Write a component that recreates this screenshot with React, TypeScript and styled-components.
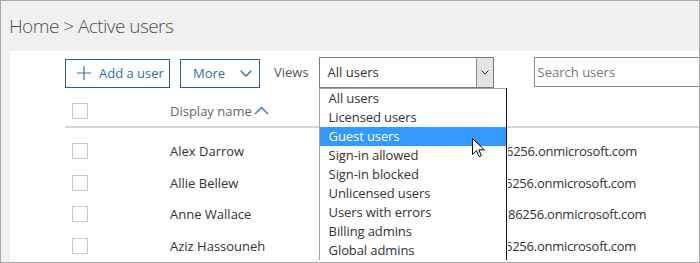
import styled, { createGlobalStyle } from "styled-components"

const GlobalStyle = createGlobalStyle`
  html, body {
    margin: 0;
    padding: 0;
    background: #ffffff;
  }
  body {
    font-family: "Open Sans", "Noto Sans", "Liberation Sans", sans-serif;
  }
`

const Frame = styled.div`
  width: 700px;
  height: 263px;
  box-sizing: border-box;
  border: 1px solid #a9a9a9;
  background: #f0f0f0;
  display: flex;
  flex-direction: column;
  overflow: hidden;
`

const Breadcrumb = styled.div`
  height: 50px;
  padding-left: 8px;
  display: flex;
  align-items: center;
  font-size: 19px;
  font-weight: 300;
  color: #505050;
  letter-spacing: -0.55px;
`

const Panel = styled.div`
  flex: 1;
  margin-left: 9px;
  background: #ffffff;
  padding-left: 55px;
  position: relative;
`

const Toolbar = styled.div`
  display: flex;
  align-items: center;
  height: 30px;
  margin-top: 6px;
`

const OutlineButton = styled.button<{ w: number; pad: number }>`
  flex-shrink: 0;
  width: ${({ w }) => w}px;
  height: 29px;
  margin-top: 2px;
  box-sizing: border-box;
  border: 1px solid #2b5f94;
  background: #ffffff;
  color: #2f6eac;
  font-family: inherit;
  font-size: 13px;
  white-space: nowrap;
  display: flex;
  align-items: center;
  gap: 8px;
  padding: 0 0 0 ${({ pad }) => pad}px;
  margin-right: 10px;
`

const Label = styled.span`
  flex-shrink: 0;
  font-size: 13px;
  color: #555555;
  margin: 0 10px 0 4px;
`

const SelectWrap = styled.div`
  flex-shrink: 0;
  position: relative;
  width: 175px;
  height: 31px;
  box-sizing: border-box;
  border: 1px solid #7a7a7a;
  display: flex;
  align-items: center;
`

const SelectValue = styled.span`
  flex: 1;
  font-size: 13px;
  color: #333333;
  padding-left: 8px;
`

const SelectButton = styled.div`
  width: 17px;
  height: 100%;
  box-sizing: border-box;
  border-left: 1px solid #8a8a8a;
  background: #e3e3e3;
  display: flex;
  align-items: center;
  justify-content: center;
`

const Menu = styled.ul`
  position: absolute;
  top: 30px;
  left: -1px;
  width: 188px;
  margin: 0;
  padding: 0;
  list-style: none;
  box-sizing: border-box;
  background: #ffffff;
  border-left: 1px solid #a0a0a0;
  border-right: 1px solid #111111;
  border-top: 1px solid #a0a0a0;
  z-index: 5;
`

const MenuItem = styled.li<{ active?: boolean }>`
  height: 19px;
  line-height: 19px;
  padding-left: 9px;
  font-size: 13px;
  letter-spacing: -0.1px;
  color: ${({ active }) => (active ? "#ffffff" : "#333333")};
  background: ${({ active }) => (active ? "#3399ff" : "transparent")};
  white-space: nowrap;
`

const Search = styled.div`
  flex-shrink: 0;
  margin-left: 40px;
  width: 200px;
  height: 30px;
  box-sizing: border-box;
  border: 1px solid #8a8a8a;
  display: flex;
  align-items: center;
  padding-left: 3px;
  font-size: 13px;
  color: #777777;
`

const Table = styled.div`
  margin-top: 8px;
`

const HeaderRow = styled.div`
  display: flex;
  align-items: center;
  height: 31px;
  border-bottom: 2px solid #d4d4d4;
`

const Body = styled.div`
  padding-top: 7px;
`

const Row = styled.div`
  display: flex;
  align-items: center;
  height: 31.7px;
`

const Check = styled.div`
  width: 16px;
  height: 16px;
  box-sizing: border-box;
  border: 1px solid #c8c8c8;
  margin-left: 7px;
  flex-shrink: 0;
`

const NameCell = styled.div<{ head?: boolean }>`
  margin-left: 82px;
  width: 338px;
  flex-shrink: 0;
  font-size: 13px;
  color: ${({ head }) => (head ? "#666666" : "#333333")};
  display: flex;
  align-items: center;
  gap: 2px;
  white-space: nowrap;
`

const MailCell = styled.div`
  overflow: hidden;
  font-size: 13px;
  letter-spacing: -0.25px;
  color: #333333;
  white-space: nowrap;
`

const MailText = styled.span<{ shift: number }>`
  display: inline-block;
  margin-left: ${({ shift }) => -shift}px;
`

const Cursor = styled.svg`
  position: absolute;
  left: 462px;
  top: 87px;
  z-index: 6;
`

// only the part of each user name that shows right of the open menu
const users = [
  { name: "Alex Darrow", mail: "6256.onmicrosoft.com", shift: 2 },
  { name: "Allie Bellew", mail: "6256.onmicrosoft.com", shift: 3 },
  { name: "Anne Wallace", mail: "86256.onmicrosoft.com", shift: 0 },
  { name: "Aziz Hassouneh", mail: "6256.onmicrosoft.com", shift: 3 },
]

const views = [
  "All users",
  "Licensed users",
  "Guest users",
  "Sign-in allowed",
  "Sign-in blocked",
  "Unlicensed users",
  "Users with errors",
  "Billing admins",
  "Global admins",
]

export default function App() {
  return (
    <>
      <GlobalStyle />
      <Frame>
        <Breadcrumb>Home &gt; Active users</Breadcrumb>
        <Panel>
          <Toolbar>
            <OutlineButton w={105} pad={11}>
              <svg width="14" height="14" viewBox="0 0 14 14">
                <path d="M7 0v14M0 7h14" stroke="#2f6eac" strokeWidth="1.2" />
              </svg>
              Add a user
            </OutlineButton>
            <OutlineButton w={80} pad={12}>
              More
              <svg width="12" height="7" viewBox="0 0 12 7" style={{ marginLeft: 7 }}>
                <path d="M0.7 0.7l5.3 5.3 5.3-5.3" stroke="#2f6eac" strokeWidth="1.4" fill="none" />
              </svg>
            </OutlineButton>
            <Label>Views</Label>
            <SelectWrap>
              <SelectValue>All users</SelectValue>
              <SelectButton>
                <svg width="8" height="5" viewBox="0 0 8 5">
                  <path d="M0.5 0.5l3.5 3.5 3.5-3.5" stroke="#333" strokeWidth="1" fill="none" />
                </svg>
              </SelectButton>
              <Menu>
                {views.map((v) => (
                  <MenuItem key={v} active={v === "Guest users"}>
                    {v}
                  </MenuItem>
                ))}
              </Menu>
            </SelectWrap>
            <Search>Search users</Search>
          </Toolbar>
          <Table>
            <HeaderRow>
              <Check />
              <NameCell head>
                Display name
                <svg width="15" height="9" viewBox="0 0 15 9">
                  <path d="M1 8l6.5-6.5 6.5 6.5" stroke="#2f6eac" strokeWidth="1.3" fill="none" />
                </svg>
              </NameCell>
            </HeaderRow>
            <Body>
              {users.map((u) => (
                <Row key={u.name}>
                  <Check />
                  <NameCell>{u.name}</NameCell>
                  <MailCell>
                    <MailText shift={u.shift}>{u.mail}</MailText>
                  </MailCell>
                </Row>
              ))}
            </Body>
          </Table>
          <Cursor width="13" height="20" viewBox="0 0 13 20">
            <path
              d="M0.5 0.5v16l4-3.8 2.6 6 2.3-1-2.6-5.8h5.6z"
              fill="#ffffff"
              stroke="#000000"
              strokeWidth="1"
              strokeLinejoin="miter"
            />
          </Cursor>
        </Panel>
      </Frame>
    </>
  )
}
